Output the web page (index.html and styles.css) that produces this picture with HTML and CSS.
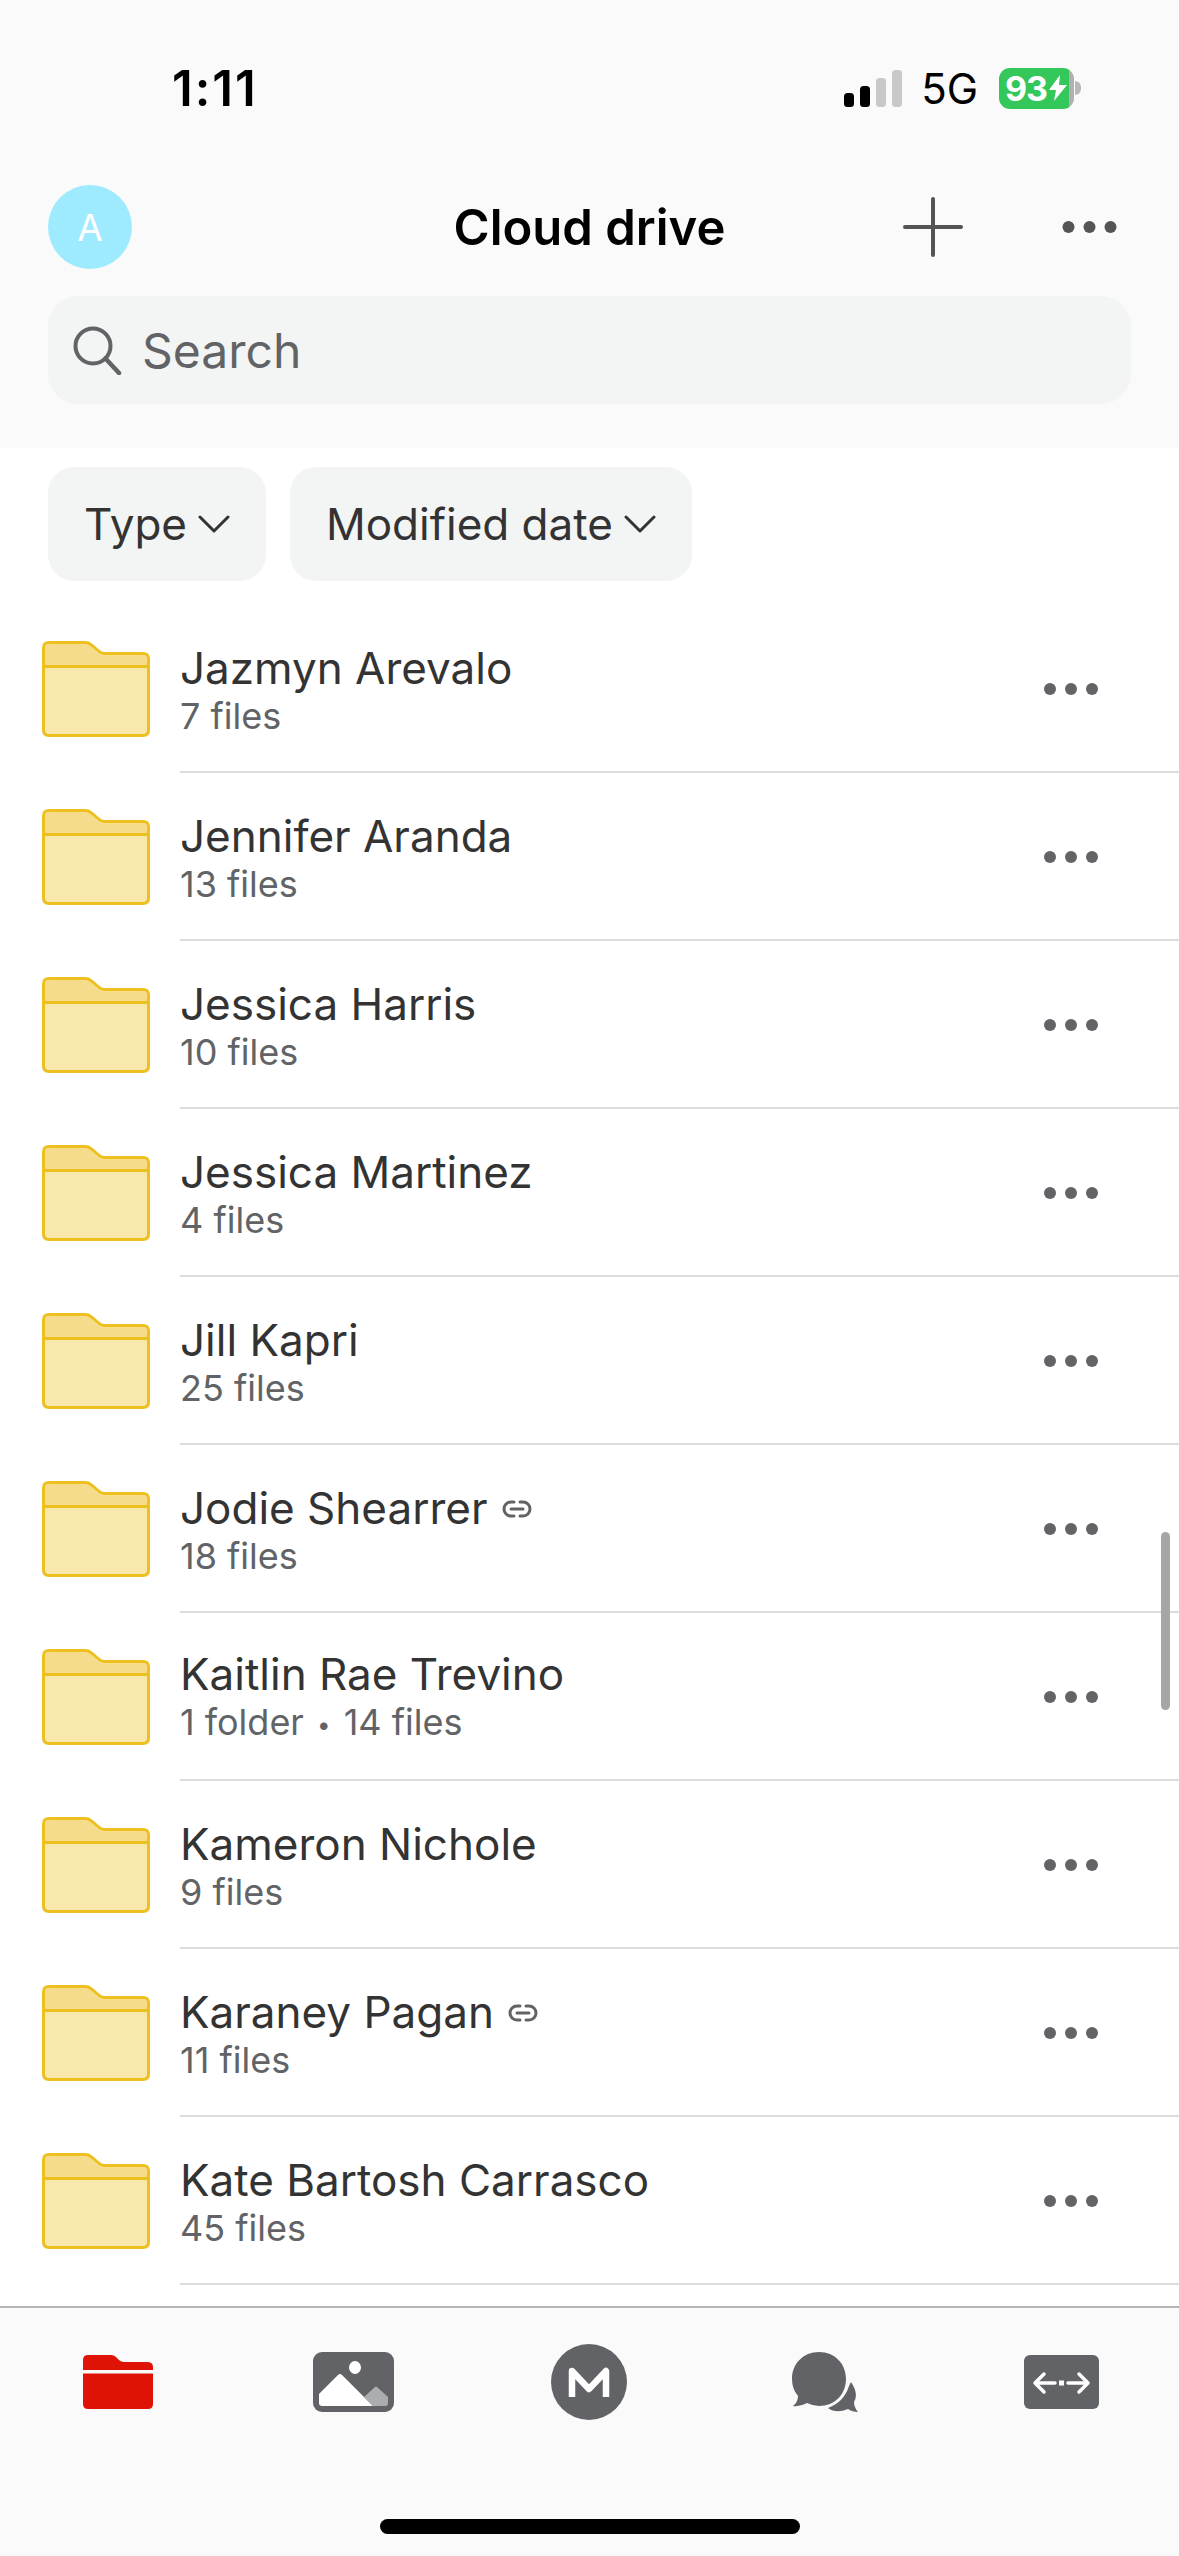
FILE: index.html
```html
<!DOCTYPE html>
<html lang="en">
<head>
    <meta charset="UTF-8">
    <meta name="viewport" content="width=device-width, initial-scale=1.0">
    <title>Cloud drive</title>
    <link rel="stylesheet" href="styles.css">
</head>
<body>
    <svg class="sprite" aria-hidden="true">
        <symbol id="folder" viewBox="0 0 108 96">
            <path d="M7 1.5H43Q47 1.5 50 4.5L56 9.5Q59 12.5 63 12.5H101Q106.500 12.500 106.500 18V89Q106.500 94.500 101 94.500H7Q1.500 94.500 1.500 89V7Q1.500 1.500 7 1.500Z" fill="#f8e8ac" stroke="#edc01f" stroke-width="3"/>
            <path d="M3 24V7Q3 3 7 3H43Q46.500 3 49 5.500L55 10.500Q58.500 14 63 14H101Q105 14 105 18V24Z" fill="#f5dc8a"/>
            <path d="M2 25.500H106" stroke="#edc01f" stroke-width="3"/>
        </symbol>
        <symbol id="more" viewBox="0 0 54 12">
            <circle cx="6" cy="6" r="6"/>
            <circle cx="27" cy="6" r="6"/>
            <circle cx="48" cy="6" r="6"/>
        </symbol>
        <symbol id="link" viewBox="0 0 30 18">
            <path d="M12 2H9a7 7 0 0 0 0 14h3M18 2h3a7 7 0 0 1 0 14h-3M9 9h12" fill="none" stroke="#616366" stroke-width="3" stroke-linecap="round"/>
        </symbol>
    </svg>

    <header class="top">
        <div class="status">
            <span class="clock">1:11</span>
            <div class="status-right">
                <svg class="signal" width="58" height="37" viewBox="0 0 58 37">
                    <rect x="0" y="23" width="10" height="14" rx="3.500" fill="#000"/>
                    <rect x="16" y="16" width="10" height="21" rx="3.500" fill="#000"/>
                    <rect x="32" y="8" width="10" height="29" rx="3.500" fill="#c8c8c8"/>
                    <rect x="48" y="0" width="10" height="37" rx="3.500" fill="#c8c8c8"/>
                </svg>
                <span class="network">5G</span>
                <div class="battery">
                    <span class="battery-level">93</span>
                    <svg class="bolt" width="18" height="26" viewBox="0 0 18 26"><path d="M11 0L0 15H7L5 26L18 10H10Z" fill="#fff"/></svg>
                    <span class="battery-nub"></span>
                </div>
            </div>
        </div>
        <div class="nav">
            <div class="nav-left"><span class="avatar">A</span></div>
            <h1 class="nav-title">Cloud drive</h1>
            <div class="nav-actions">
                <svg width="60" height="60" viewBox="0 0 60 60"><path d="M30 2V58M2 30H58" stroke="#545454" stroke-width="4" stroke-linecap="round"/></svg>
                <svg class="nav-more" width="55" height="12"><use href="#more" fill="#545454"/></svg>
            </div>
        </div>
        <div class="search">
            <svg width="50" height="50" viewBox="0 0 50 50"><circle cx="21" cy="21" r="17.500" fill="none" stroke="#616366" stroke-width="4"/><path d="M33.500 33.500L47 48" stroke="#616366" stroke-width="4.500" stroke-linecap="round"/></svg>
            <span>Search</span>
        </div>
    </header>

    <div class="filters">
        <div class="chip">Type <svg width="32" height="18" viewBox="0 0 32 18"><path d="M2 2L16 16L30 2" fill="none" stroke="#333" stroke-width="3" stroke-linecap="round" stroke-linejoin="round"/></svg></div>
        <div class="chip">Modified date <svg width="32" height="18" viewBox="0 0 32 18"><path d="M2 2L16 16L30 2" fill="none" stroke="#333" stroke-width="3" stroke-linecap="round" stroke-linejoin="round"/></svg></div>
    </div>

    <main class="list">
        <div class="row">
            <svg class="folder"><use href="#folder"/></svg>
            <div class="row-body">
                <div class="row-text">
                    <div class="name">Jazmyn Arevalo</div>
                    <div class="meta">7 files</div>
                </div>
                <svg class="more"><use href="#more"/></svg>
            </div>
        </div>
        <div class="row">
            <svg class="folder"><use href="#folder"/></svg>
            <div class="row-body">
                <div class="row-text">
                    <div class="name">Jennifer Aranda</div>
                    <div class="meta">13 files</div>
                </div>
                <svg class="more"><use href="#more"/></svg>
            </div>
        </div>
        <div class="row">
            <svg class="folder"><use href="#folder"/></svg>
            <div class="row-body">
                <div class="row-text">
                    <div class="name">Jessica Harris</div>
                    <div class="meta">10 files</div>
                </div>
                <svg class="more"><use href="#more"/></svg>
            </div>
        </div>
        <div class="row">
            <svg class="folder"><use href="#folder"/></svg>
            <div class="row-body">
                <div class="row-text">
                    <div class="name">Jessica Martinez</div>
                    <div class="meta">4 files</div>
                </div>
                <svg class="more"><use href="#more"/></svg>
            </div>
        </div>
        <div class="row">
            <svg class="folder"><use href="#folder"/></svg>
            <div class="row-body">
                <div class="row-text">
                    <div class="name">Jill Kapri</div>
                    <div class="meta">25 files</div>
                </div>
                <svg class="more"><use href="#more"/></svg>
            </div>
        </div>
        <div class="row">
            <svg class="folder"><use href="#folder"/></svg>
            <div class="row-body">
                <div class="row-text">
                    <div class="name">Jodie Shearrer <svg class="link"><use href="#link"/></svg></div>
                    <div class="meta">18 files</div>
                </div>
                <svg class="more"><use href="#more"/></svg>
            </div>
        </div>
        <div class="row">
            <svg class="folder"><use href="#folder"/></svg>
            <div class="row-body">
                <div class="row-text">
                    <div class="name">Kaitlin Rae Trevino</div>
                    <div class="meta">1 folder <span class="meta-dot">•</span> 14 files</div>
                </div>
                <svg class="more"><use href="#more"/></svg>
            </div>
        </div>
        <div class="row">
            <svg class="folder"><use href="#folder"/></svg>
            <div class="row-body">
                <div class="row-text">
                    <div class="name">Kameron Nichole</div>
                    <div class="meta">9 files</div>
                </div>
                <svg class="more"><use href="#more"/></svg>
            </div>
        </div>
        <div class="row">
            <svg class="folder"><use href="#folder"/></svg>
            <div class="row-body">
                <div class="row-text">
                    <div class="name">Karaney Pagan <svg class="link"><use href="#link"/></svg></div>
                    <div class="meta">11 files</div>
                </div>
                <svg class="more"><use href="#more"/></svg>
            </div>
        </div>
        <div class="row">
            <svg class="folder"><use href="#folder"/></svg>
            <div class="row-body">
                <div class="row-text">
                    <div class="name">Kate Bartosh Carrasco</div>
                    <div class="meta">45 files</div>
                </div>
                <svg class="more"><use href="#more"/></svg>
            </div>
        </div>
        <div class="scrollbar"></div>
    </main>

    <footer class="tabs">
        <div class="tab-icons">
            <svg width="70" height="54" viewBox="0 0 70 54">
                <path d="M5 0H28Q31 0 33 2L36 5Q38 7 41 7H64Q70 7 70 12V15H0V5Q0 0 5 0Z" fill="#de1306"/>
                <path d="M0 18.500H70V49Q70 54 65 54H5Q0 54 0 49Z" fill="#de1306"/>
            </svg>
            <svg width="81" height="60" viewBox="0 0 81 60">
                <rect width="81" height="60" rx="9" fill="#616366"/>
                <ellipse cx="42" cy="15.500" rx="6" ry="6.500" fill="#fff"/>
                <path d="M6 42L25 23Q27 21 29 23L60 54H9Q6 54 6 51Z" fill="#fff"/>
                <path d="M51 45L62 35Q63 34 64 35L75 45V51Q75 54 72 54H60Z" fill="#acadaf"/>
            </svg>
            <svg width="76" height="76" viewBox="0 0 76 76">
                <circle cx="38" cy="38" r="38" fill="#616366"/>
                <path d="M21 53V27L38 45L55 27V53" fill="none" stroke="#fff" stroke-width="6.500" stroke-linejoin="round"/>
            </svg>
            <svg width="67" height="60" viewBox="0 0 67 60">
                <path d="M59 30Q67 42 62 50Q62 55 66 60Q60 60 56 57Q44 62 36 56Q52 50 57 34Z" fill="#616366"/>
                <path d="M27 0C43 0 54 12 54 27S43 54 27 54Q21 54 15 51Q8 55 1 54Q6 50 6 44Q0 37 0 27C0 12 11 0 27 0Z" fill="#616366"/>
            </svg>
            <svg width="75" height="54" viewBox="0 0 75 54">
                <rect width="75" height="54" rx="6" fill="#616366"/>
                <path d="M20 19L11 28L20 37M11 28H31M44 28H64M55 19L64 28L55 37" fill="none" stroke="#fff" stroke-width="3.500" stroke-linecap="round" stroke-linejoin="round"/>
                <rect x="35" y="25.500" width="5" height="5" fill="#fff"/>
            </svg>
        </div>
        <div class="home-bar"></div>
    </footer>
</body>
</html>
```

FILE: styles.css
```css
* {
    box-sizing: border-box;
}
body {
    display: flex;
    flex-direction: column;
    width: 1179px;
    height: 2556px;
    margin: 0;
    overflow: hidden;
    background-color: #fff;
    font-family: Inter, "Noto Sans", sans-serif;
    color: #333;
}
.sprite {
    display: none;
}

/* header */
.top {
    height: 448px;
    background-color: #fafafa;
}
.status {
    display: flex;
    align-items: center;
    justify-content: space-between;
    height: 176px;
    padding: 0 105px 0 172px;
}
.clock {
    font-size: 49px;
    font-weight: 600;
    letter-spacing: 2px;
    color: #000;
}
.status-right {
    display: flex;
    align-items: center;
}
.signal {
    margin-right: 19px;
}
.network {
    margin-right: 21px;
    font-size: 42px;
    font-weight: 400;
    color: #000;
}
.battery {
    position: relative;
    display: flex;
    align-items: center;
    width: 75px;
    height: 41px;
    padding-left: 6px;
    border-radius: 11px;
    background: linear-gradient(to right, #34c759 93%, #b0b0b0 93%);
}
.battery-level {
    font-size: 34px;
    font-weight: 700;
    letter-spacing: -1px;
    color: #fff;
}
.bolt {
    flex: none;
    margin-left: 2px;
}
.battery-nub {
    position: absolute;
    top: 13px;
    right: -7px;
    width: 6px;
    height: 14px;
    border-radius: 0 7px 7px 0;
    background-color: #b8b8b8;
}

.nav {
    display: grid;
    grid-template-columns: 1fr auto 1fr;
    align-items: center;
    height: 84px;
    margin: 9px 0 27px;
    padding: 0 48px;
}
.avatar {
    display: flex;
    align-items: center;
    justify-content: center;
    width: 84px;
    height: 84px;
    border-radius: 50%;
    background-color: #9eeaff;
    color: #fff;
    font-size: 37px;
}
.nav-title {
    margin: 0;
    font-size: 49px;
    font-weight: 600;
    color: #000;
}
.nav-actions {
    display: flex;
    align-items: center;
    justify-content: flex-end;
    gap: 99px;
    padding-right: 14px;
}
.nav-more {
    display: block;
}
.search {
    display: flex;
    align-items: center;
    gap: 20px;
    height: 108px;
    margin: 0 48px;
    padding-left: 24px;
    border-radius: 30px;
    background-color: #f3f5f4;
    font-size: 48px;
    color: #616366;
}

/* filters */
.filters {
    display: flex;
    gap: 24px;
    height: 157px;
    padding: 19px 48px 0;
}
.chip {
    display: flex;
    align-items: center;
    gap: 11px;
    height: 114px;
    padding: 0 36px;
    border-radius: 26px;
    background-color: #f3f5f4;
    font-size: 44px;
    font-weight: 430;
    color: #333;
}

/* folder rows */
.list {
    position: relative;
    flex: 1;
}
.row {
    display: flex;
    align-items: center;
    height: 168px;
    padding-left: 42px;
}
.folder {
    flex: none;
    width: 108px;
    height: 96px;
    margin-right: 30px;
}
.row-body {
    display: flex;
    flex: 1;
    align-items: center;
    height: 100%;
    padding: 2px 81px 0 0;
    border-bottom: 2px solid #dcdcdc;
}
.row-text {
    flex: 1;
}
.name {
    font-size: 44px;
    font-weight: 420;
    line-height: 54px;
    color: #333;
}
.meta {
    margin-top: -1px;
    font-size: 36px;
    line-height: 44px;
    color: #616366;
}
.meta-dot {
    margin: 0 3px;
    font-size: 24px;
    vertical-align: 2px;
}
.link {
    width: 30px;
    height: 18px;
    margin-left: 2px;
    vertical-align: 6px;
}
.more {
    width: 54px;
    height: 12px;
    fill: #616366;
}
.scrollbar {
    position: absolute;
    top: 927px;
    right: 9px;
    width: 9px;
    height: 178px;
    border-radius: 5px;
    background-color: #a6a6a6;
}

/* tab bar */
.tabs {
    height: 250px;
    border-top: 2px solid #b4b4b4;
    background-color: #fafafa;
}
.tab-icons {
    display: grid;
    grid-template-columns: repeat(5, 1fr);
    justify-items: center;
    align-items: center;
    height: 76px;
    margin-top: 36px;
}
.home-bar {
    width: 420px;
    height: 15px;
    margin: 99px auto 0;
    border-radius: 8px;
    background-color: #000;
}
```
